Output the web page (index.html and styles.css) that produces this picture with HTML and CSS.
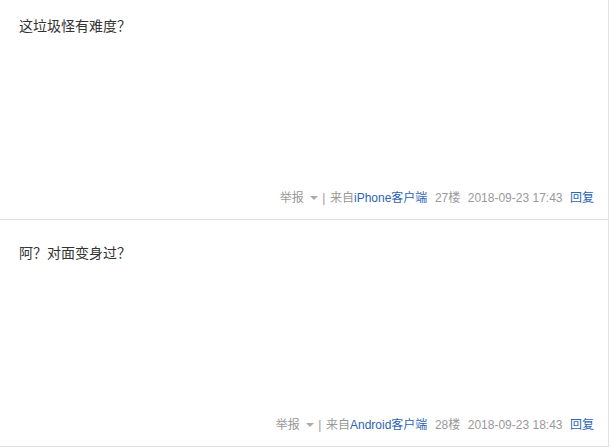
FILE: index.html
```
<!DOCTYPE html>
<html lang="zh-CN">
  <head>
    <meta charset="UTF-8" />
    <title>帖子回复</title>
    <link rel="stylesheet" href="styles.css">
  </head>
  <body>
    <div class="thread">
      <div class="post">
        <div class="content">这垃圾怪有难度？</div>
        <div class="tail">
          <span class="report">举报<i class="arrow"></i></span>
          <span class="sep">|</span>
          <span>来自<a href="#">iPhone客户端</a></span>
          <span>27楼</span>
          <span>2018-09-23 17:43</span>
          <a href="#">回复</a>
        </div>
      </div>
      <div class="post">
        <div class="content">阿？对面变身过？</div>
        <div class="tail">
          <span class="report">举报<i class="arrow"></i></span>
          <span class="sep">|</span>
          <span>来自<a href="#">Android客户端</a></span>
          <span>28楼</span>
          <span>2018-09-23 18:43</span>
          <a href="#">回复</a>
        </div>
      </div>
    </div>
  </body>
</html>
```

FILE: styles.css
```
body{
  margin: 0;
  background: #fff;
  font-family: "Liberation Sans", "Noto Sans CJK SC", sans-serif;
}
.thread{
  width: 608px;
  border-right: 1px solid #e1e1e1;
  margin-top: -7px;
}
.post{
  padding: 21px 14px 11px 19px;
  border-bottom: 1px solid #e1e1e1;
}
.content{
  font-size: 14px;
  line-height: 24px;
  color: #333;
  height: 174px;
}
.tail{
  display: flex;
  justify-content: flex-end;
  align-items: center;
  gap: 7.5px;
  font-size: 12px;
  line-height: 20px;
  color: #999;
}
.tail a{
  color: #2d64b3;
  text-decoration: none;
}
.report{
  display: flex;
  align-items: center;
}
.arrow{
  margin-left: 6px;
  border-left: 4px solid transparent;
  border-right: 4px solid transparent;
  border-top: 4px solid #aaa;
}
.sep{
  margin: 0 -3px;
}
```
